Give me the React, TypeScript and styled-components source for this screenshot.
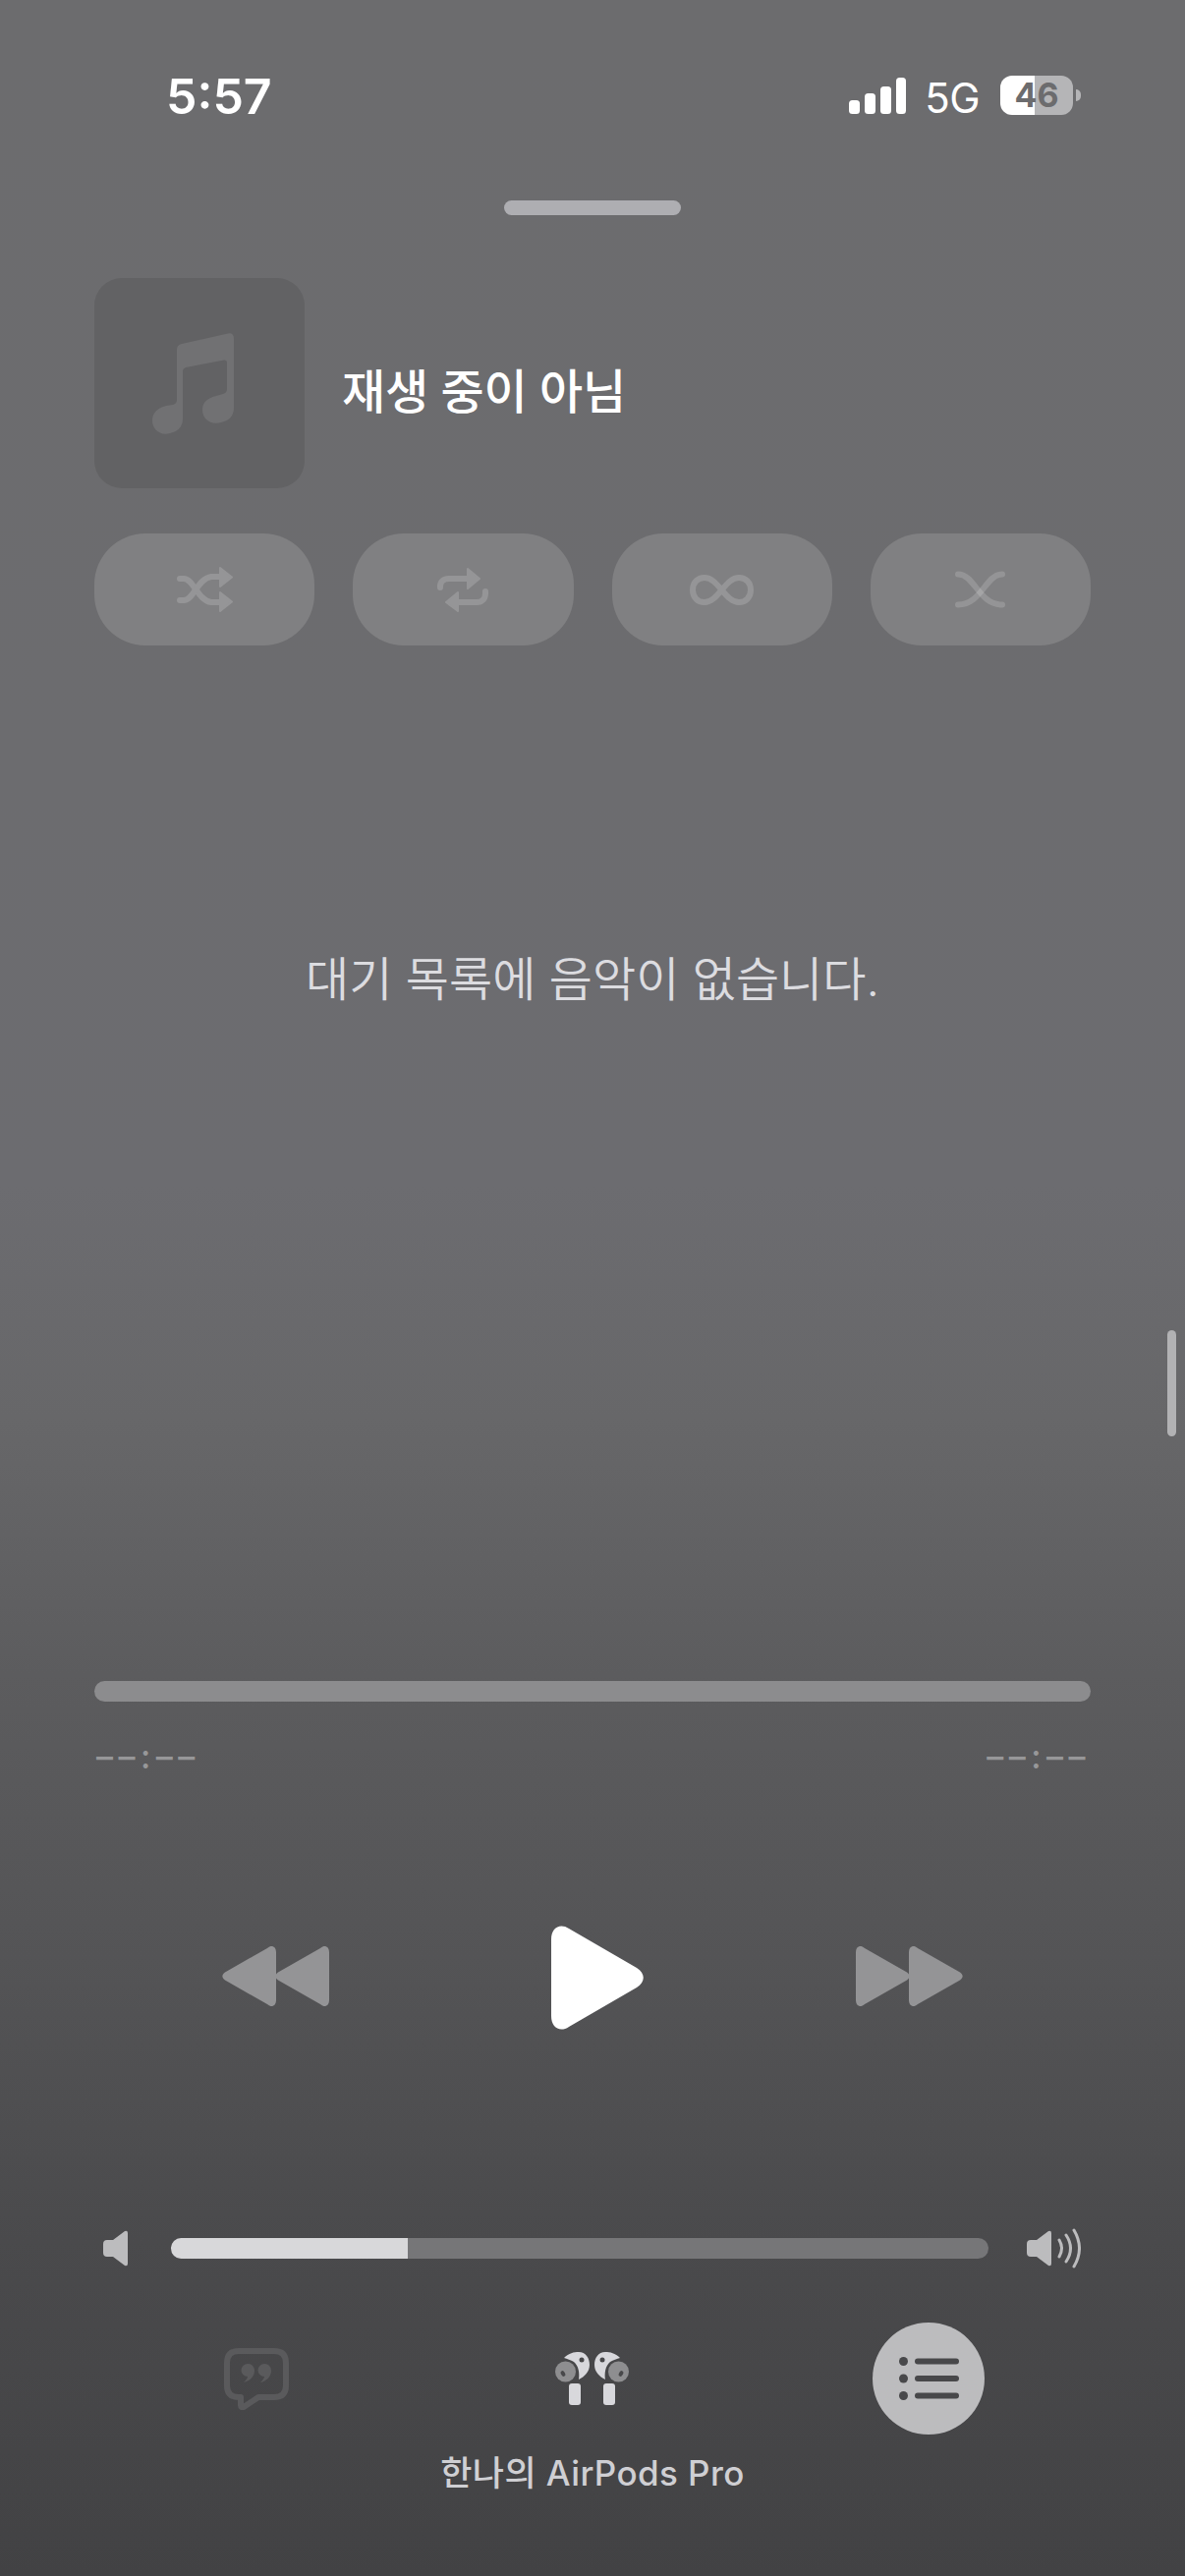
import React from "react";
import styled, { createGlobalStyle } from "styled-components";

const Global = createGlobalStyle`
  html, body { margin: 0; padding: 0; background: #555557; }
  body { font-family: Inter, "Noto Sans CJK KR", sans-serif; }
  * { box-sizing: border-box; }
  svg { display: block; flex: none; }
`;

const Page = styled.div`
  position: relative;
  width: 1206px;
  height: 2622px;
  overflow: hidden;
  padding: 77px 96px 0;
  display: flex;
  flex-direction: column;
  background: linear-gradient(180deg, #6c6c6e 0%, #6c6c6f 30%, #6c6c70 46%, #676769 55%, #5c5c5e 65%, #545456 76%, #4a4a4c 87%, #424244 100%);
`;

const StatusBar = styled.div`
  height: 40px;
  display: flex;
  align-items: center;
  justify-content: space-between;
  padding: 0 10px 0 73px;
  color: #fff;
`;
const Clock = styled.div`
  font-size: 50px;
  font-weight: 560;
  line-height: 40px;
  margin-top: 2px;
  height: 40px;
`;
const StatusRight = styled.div`
  display: flex;
  align-items: center;
`;
const Network = styled.div`
  font-size: 42px;
  font-weight: 400;
  line-height: 40px;
  margin: 5px 21px 0 19px;
  letter-spacing: -0.5px;
`;
const Battery = styled.div`
  width: 74px;
  height: 40px;
  border-radius: 12px;
  background: linear-gradient(90deg, #fff 0 47%, #b5b5b7 47% 100%);
  color: #6c6c6e;
  font-size: 34px;
  font-weight: 700;
  line-height: 40px;
  text-align: center;
`;
const BatteryNub = styled.div`
  width: 5px;
  height: 12px;
  margin-left: 3px;
  border-radius: 0 6px 6px 0;
  background: #b5b5b7;
`;

const Handle = styled.div`
  width: 180px;
  height: 15px;
  margin-top: 87px;
  align-self: center;
  border-radius: 8px;
  background: #aeaeb2;
`;

const NowPlaying = styled.div`
  margin-top: 64px;
  display: flex;
  align-items: center;
  gap: 38px;
`;
const Artwork = styled.div`
  width: 214px;
  height: 214px;
  padding-right: 13px;
  border-radius: 28px;
  background: #626264;
  display: flex;
  align-items: center;
  justify-content: center;
`;
const Title = styled.div`
  color: #fff;
  font-size: 48px;
  font-weight: 500;
  line-height: 60px;
  margin-top: 18px;
  letter-spacing: -0.2px;
`;

const ModeRow = styled.div`
  margin-top: 46px;
  display: grid;
  grid-template-columns: repeat(4, 1fr);
  column-gap: 39px;
`;
const ModeButton = styled.div`
  height: 114px;
  border-radius: 52px;
  background: #808082;
  display: flex;
  align-items: center;
  justify-content: center;
`;

const Message = styled.div`
  margin-top: 310px;
  color: #dcdce0;
  font-size: 48px;
  font-weight: 350;
  line-height: 60px;
  text-align: center;
`;

const Scrubber = styled.div`
  margin-top: 684px;
  height: 21px;
  border-radius: 11px;
  background: #8c8c8e;
`;
const TimeRow = styled.div`
  margin-top: 36px;
  display: flex;
  justify-content: space-between;
  padding: 0 0 0 2px;
  color: #979799;
  font-size: 34px;
  font-weight: 500;
  line-height: 40px;
`;
const TimeLabel = styled.span`
  letter-spacing: 5.5px;
`;

const Transport = styled.div`
  margin-top: 152px;
  height: 106px;
  padding: 0 130px;
  display: flex;
  align-items: center;
  justify-content: space-between;
`;
const SkipGlyph = styled.svg`
  margin-bottom: 3px;
`;

const VolumeRow = styled.div`
  margin-top: 201px;
  height: 42px;
  padding: 0 10px 0 9px;
  display: flex;
  align-items: center;
`;
const VolumeTrack = styled.div`
  flex: 1;
  height: 21px;
  margin: 0 39px 0 44px;
  border-radius: 11px;
  overflow: hidden;
  background: #767678;
`;
const VolumeFill = styled.div<{ $value: number }>`
  width: ${(p) => p.$value}%;
  height: 100%;
  background: #d8d8da;
`;

const BottomRow = styled.div`
  margin-top: 55px;
  height: 114px;
  display: grid;
  grid-template-columns: repeat(3, 1fr);
  column-gap: 13px;
  align-items: center;
  justify-items: center;
`;
const QueueButton = styled.div`
  width: 114px;
  height: 114px;
  border-radius: 50%;
  background: #bcbcbe;
  display: flex;
  align-items: center;
  justify-content: center;
`;
const DeviceLabel = styled.div`
  margin-top: 17px;
  color: #cfcfd3;
  font-size: 35px;
  font-weight: 500;
  line-height: 44px;
  text-align: center;
  letter-spacing: 0.4px;
`;

const ScrollThumb = styled.div`
  position: absolute;
  left: 1188px;
  top: 1354px;
  width: 9px;
  height: 108px;
  border-radius: 5px;
  background: #b2b2b4;
`;

const ICON = "rgba(255,255,255,0.16)";

const SignalIcon = () => (
  <svg width="58" height="37" viewBox="0 0 58 37" fill="#fff">
    <rect x="0" y="23" width="11" height="14" rx="3.5" />
    <rect x="16" y="16" width="11" height="21" rx="3.5" />
    <rect x="32" y="9" width="11" height="28" rx="3.5" />
    <rect x="48" y="0" width="10" height="37" rx="3.5" />
  </svg>
);

const MusicNote = () => (
  <svg width="83" height="103" viewBox="0 0 83 103" fill="#717173">
    <path d="M25 17Q25 12 30 11L77 .5Q83-.5 83 6V76Q83 88 70 91C60 94 51 88 51 78C51 70 57 66 65 64L72 62Q76 61 76 57V30Q76 27 73 27.5L34 35Q31 36 31 39V87Q31 99 18 102C8 105 0 98 0 89C0 81 6 76 14 74L21 73Q25 72 25 68Z" />
  </svg>
);

const ShuffleIcon = () => (
  <svg width="57" height="46" viewBox="0 0 57 46" fill="none">
    <g stroke="#959597" strokeWidth="6" strokeLinecap="round">
      <path d="M3 12H7C17 12 21 34 35 36H46" />
      <path d="M3 34H7C17 34 21 12 35 10H46" />
    </g>
    <g fill="#959597" stroke="#959597" strokeWidth="2" strokeLinejoin="round">
      <path d="M44 1L56 10.5L44 20Z" />
      <path d="M44 26L56 35.5L44 45Z" />
    </g>
  </svg>
);

const RepeatIcon = () => (
  <svg width="52" height="45" viewBox="0 0 52 45" fill="none">
    <g stroke="#959597" strokeWidth="6" strokeLinecap="round">
      <path d="M3 20V19C3 14 6 11 12 11H34" />
      <path d="M49 24V26C49 31 46 35 40 35H18" />
    </g>
    <g fill="#959597" stroke="#959597" strokeWidth="2" strokeLinejoin="round">
      <path d="M31 1L43 11L31 21Z" />
      <path d="M21 25L9 35L21 44Z" />
    </g>
  </svg>
);

const InfinityIcon = () => (
  <svg width="65" height="31" viewBox="0 0 65 31" fill="none">
    <path
      stroke="#959597"
      strokeWidth="6"
      d="M32.5 15.5C27 9 22 3 15 3C8 3 3 8 3 15.5C3 23 8 28 15 28C22 28 27 22 32.5 15.5C38 9 43 3 50 3C57 3 62 8 62 15.5C62 23 57 28 50 28C43 28 38 22 32.5 15.5Z"
    />
  </svg>
);

const CrossfadeIcon = () => (
  <svg width="51" height="38" viewBox="0 0 51 38" fill="none">
    <g stroke={ICON} strokeWidth="6" strokeLinecap="round">
      <path d="M3 3.500C20 3.500 24 34.500 48 34.500" />
      <path d="M3 34.500C27 34.500 31 3.500 48 3.500" />
    </g>
  </svg>
);

const TRI = "M0 6C0 0 5-2 9 2L52 26.500C55.500 29 55.500 32 52 34.500L9 59C5 63 0 61 0 55Z";

const Forward = ({ flip }: { flip?: boolean }) => (
  <SkipGlyph width="109" height="61" viewBox="0 0 109 61" fill="#949496">
    <g transform={flip ? "translate(109 0) scale(-1 1)" : undefined}>
      <path d={TRI} />
      <path d={TRI} transform="translate(54 0)" />
    </g>
  </SkipGlyph>
);

const PlayIcon = () => (
  <svg width="108" height="106" viewBox="-12 0 108 106" fill="#fff">
    <path d="M0 14C0 2 9-3 18 3L87 43C96 49 96 57 87 63L18 103C9 109 0 104 0 92Z" />
  </svg>
);

const CONE = "M25 3Q25 0 22 1L10 10H4Q0 10 0 14V23Q0 27 4 27H10L22 36Q25 37 25 34Z";

const SpeakerLow = () => (
  <svg width="25" height="37" viewBox="0 0 25 37" fill="#bcbcbe">
    <path d={CONE} />
  </svg>
);

const SpeakerHigh = () => (
  <svg width="55" height="41" viewBox="0 0 55 41" fill="none">
    <path d={CONE} fill="#bcbcbe" transform="translate(0 2)" />
    <g stroke="#bcbcbe" strokeWidth="3" strokeLinecap="round">
      <path d="M33 12Q38 20.500 33 29" />
      <path d="M40 7Q49 20.500 40 34" />
      <path d="M48 2Q59 20.500 48 39" />
    </g>
  </svg>
);

const LyricsIcon = () => (
  <svg width="66" height="63" viewBox="0 0 66 63" fill="none">
    <path
      stroke="#5a5a5c"
      strokeWidth="6"
      strokeLinejoin="round"
      d="M15 3H51Q63 3 63 15V38Q63 50 51 50H35L20 60Q17 61 17 58V50H15Q3 50 3 38V15Q3 3 15 3Z"
    />
    <g fill="#5a5a5c">
      <path d="M24 16A6.500 6.500 0 0 1 31 23C31 29 26 34 20 35C23 32 24 30 24 29A6.500 6.500 0 0 1 24 16Z" />
      <path d="M41 16A6.500 6.500 0 0 1 48 23C48 29 43 34 37 35C40 32 41 30 41 29A6.500 6.500 0 0 1 41 16Z" />
    </g>
  </svg>
);

const Bud = () => (
  <>
    <path
      fill="#d8d8dc"
      d="M9 6C14 1 19 0 24 0C31 0 35 6 35 13C35 20 30 25 24 28C25 22 24 14 19 10C16 8 12 7 9 6Z"
    />
    <circle cx="10.500" cy="20" r="10.500" fill="#8e8e90" />
    <ellipse cx="8" cy="22" rx="2" ry="3" fill="#48484a" transform="rotate(-30 8 22)" />
    <circle cx="27" cy="8" r="2.500" fill="#48484a" />
    <rect x="14" y="32" width="12" height="22" rx="3" fill="#d8d8dc" />
  </>
);

const AirPodsIcon = () => (
  <svg width="75" height="54" viewBox="0 0 75 54">
    <Bud />
    <g transform="translate(75 0) scale(-1 1)">
      <Bud />
    </g>
  </svg>
);

const QueueIcon = () => (
  <svg width="61" height="44" viewBox="0 0 61 44" fill="#48484a">
    <circle cx="4.500" cy="4.500" r="4.500" />
    <circle cx="4.500" cy="22" r="4.500" />
    <circle cx="4.500" cy="39.500" r="4.500" />
    <rect x="16" y="1.500" width="45" height="6" rx="3" />
    <rect x="16" y="19" width="45" height="6" rx="3" />
    <rect x="16" y="36.500" width="45" height="6" rx="3" />
  </svg>
);

export default function App() {
  return (
    <>
      <Global />
      <Page>
        <StatusBar>
          <Clock>5:57</Clock>
          <StatusRight>
            <SignalIcon />
            <Network>5G</Network>
            <Battery>46</Battery>
            <BatteryNub />
          </StatusRight>
        </StatusBar>
        <Handle />
        <NowPlaying>
          <Artwork>
            <MusicNote />
          </Artwork>
          <Title>재생 중이 아님</Title>
        </NowPlaying>
        <ModeRow>
          <ModeButton>
            <ShuffleIcon />
          </ModeButton>
          <ModeButton>
            <RepeatIcon />
          </ModeButton>
          <ModeButton>
            <InfinityIcon />
          </ModeButton>
          <ModeButton>
            <CrossfadeIcon />
          </ModeButton>
        </ModeRow>
        <Message>대기 목록에 음악이 없습니다.</Message>
        <Scrubber />
        <TimeRow>
          <TimeLabel>––:––</TimeLabel>
          <TimeLabel>––:––</TimeLabel>
        </TimeRow>
        <Transport>
          <Forward flip />
          <PlayIcon />
          <Forward />
        </Transport>
        <VolumeRow>
          <SpeakerLow />
          <VolumeTrack>
            <VolumeFill $value={29} />
          </VolumeTrack>
          <SpeakerHigh />
        </VolumeRow>
        <BottomRow>
          <LyricsIcon />
          <AirPodsIcon />
          <QueueButton>
            <QueueIcon />
          </QueueButton>
        </BottomRow>
        <DeviceLabel>한나의 AirPods Pro</DeviceLabel>
        <ScrollThumb />
      </Page>
    </>
  );
}
